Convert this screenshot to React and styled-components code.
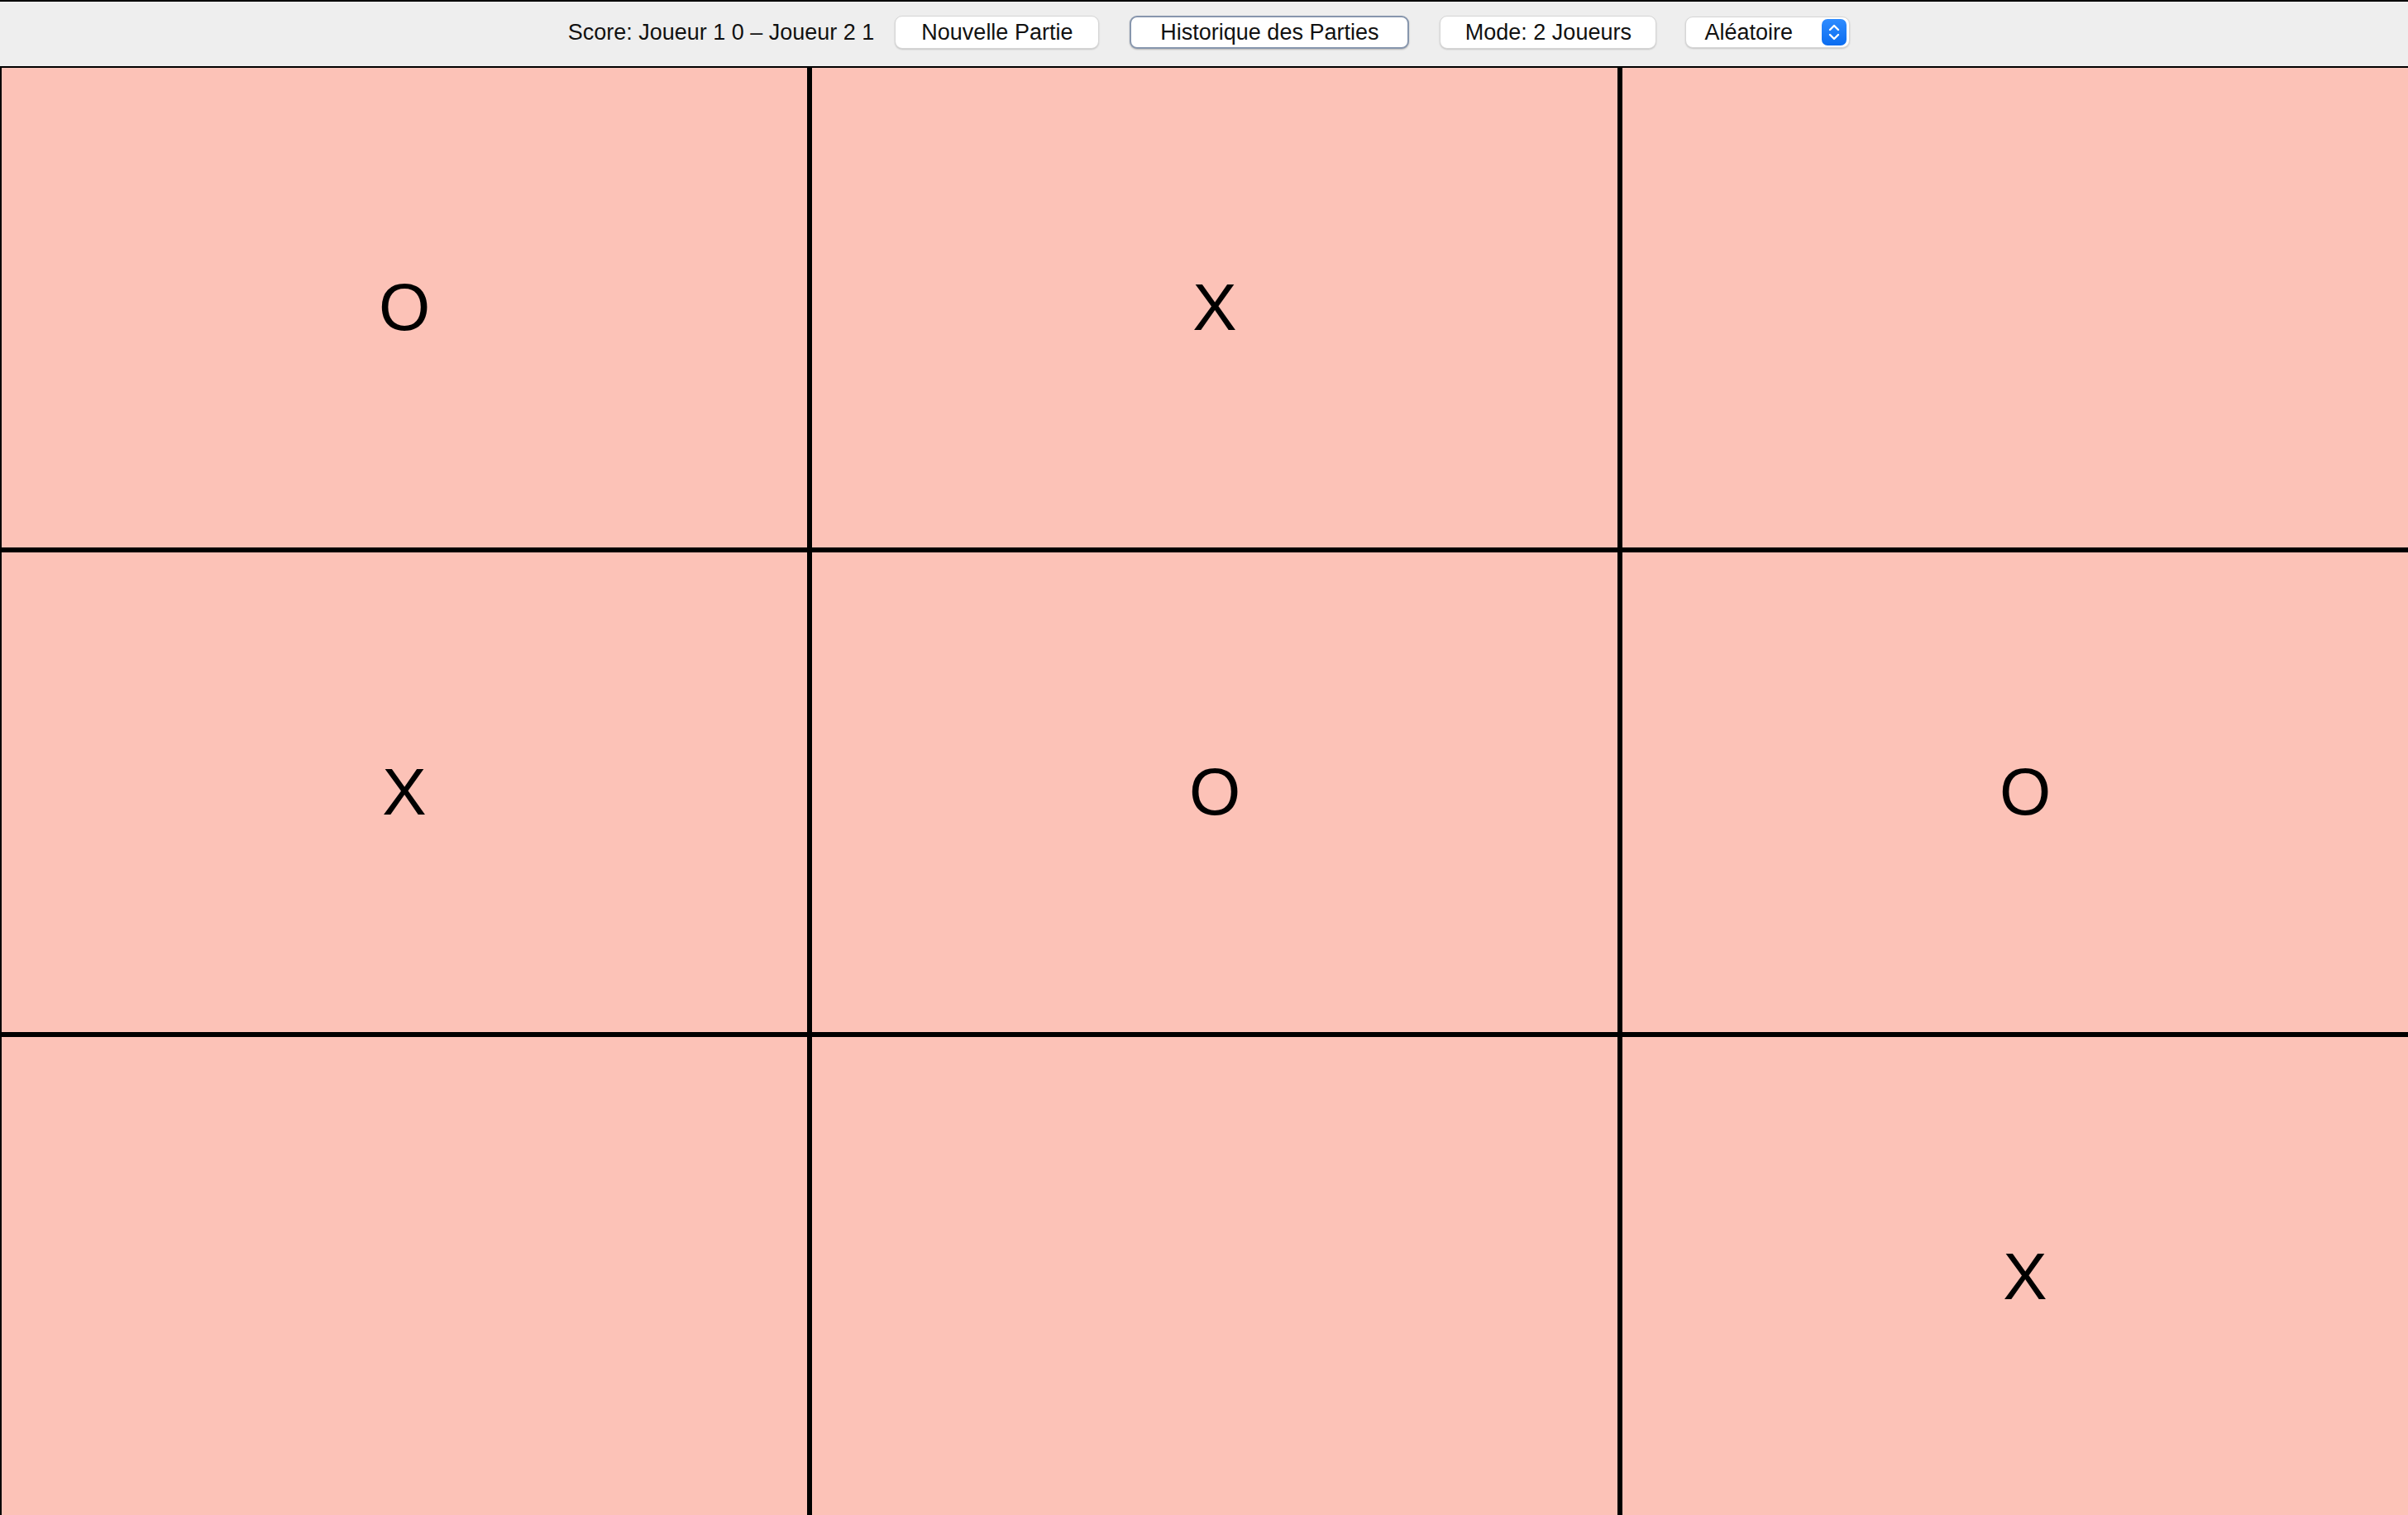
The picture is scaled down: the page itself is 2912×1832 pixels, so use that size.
import React from "react";
import styled, { createGlobalStyle } from "styled-components";

const Global = createGlobalStyle`
  html, body {
    margin: 0;
    padding: 0;
    width: 2912px;
    height: 1832px;
    overflow: hidden;
    background: #eeeeee;
  }
  * { box-sizing: border-box; }
`;

const Window = styled.div`
  width: 2912px;
  height: 1832px;
  overflow: hidden;
  border-top: 2px solid #000;
  display: flex;
  flex-direction: column;
  font-family: "Liberation Sans", Arial, sans-serif;
`;

const Toolbar = styled.div`
  height: 80px;
  flex: none;
  background: #eeeeee;
  display: flex;
  align-items: center;
  justify-content: center;
  padding: 0 0 4px 12px;
  border-bottom: 2px solid #000;
`;

const ScoreLabel = styled.span`
  font-size: 27px;
  color: #111;
  margin-right: 25px;
  white-space: nowrap;
`;

const Button = styled.button`
  width: ${(p) => p.$w}px;
  height: 40px;
  margin-right: ${(p) => p.$mr || 0}px;
  background: #ffffff;
  border: ${(p) => (p.$focused ? "2px solid #8796ad" : "1px solid #d6d6d6")};
  border-radius: 9px;
  box-shadow: ${(p) =>
    p.$focused
      ? "0 1px 2px rgba(0,0,0,0.25)"
      : "0 1px 2px rgba(0,0,0,0.18)"};
  font-family: "Liberation Sans", Arial, sans-serif;
  font-size: 27px;
  color: #111;
  padding: 0;
  display: flex;
  align-items: center;
  justify-content: center;
  white-space: nowrap;
  cursor: default;
`;

const Select = styled.div`
  width: 199px;
  height: 38px;
  background: #ffffff;
  border: 1px solid #d6d6d6;
  border-radius: 9px;
  box-shadow: 0 1px 2px rgba(0,0,0,0.18);
  display: flex;
  align-items: center;
  justify-content: space-between;
  padding: 0 3px 0 22px;
  font-size: 27px;
  color: #111;
`;

const Stepper = styled.div`
  width: 30px;
  height: 32px;
  border-radius: 7px;
  background: linear-gradient(#2f8cff, #0a6cf0);
  display: flex;
  align-items: center;
  justify-content: center;
`;

const Board = styled.div`
  flex: none;
  background: #000;
  padding: 0 0 0 2px;
  display: grid;
  grid-template-columns: repeat(3, 974px);
  grid-template-rows: repeat(3, 580px);
  gap: 6px;
  width: 2940px;
`;

const Cell = styled.div`
  background: #fcc2b7;
  display: flex;
  align-items: center;
  justify-content: center;
  font-family: "Liberation Sans", Arial, sans-serif;
  font-size: 80px;
  color: #000;
`;

const cells = ["O", "X", "", "X", "O", "O", "", "", "X"];

export default function App() {
  return (
    <>
      <Global />
      <Window>
        <Toolbar>
          <ScoreLabel>Score: Joueur 1 0 – Joueur 2 1</ScoreLabel>
          <Button $w={247} $mr={37}>Nouvelle Partie</Button>
          <Button $w={338} $mr={37} $focused>Historique des Parties</Button>
          <Button $w={262} $mr={35}>Mode: 2 Joueurs</Button>
          <Select>
            <span>Aléatoire</span>
            <Stepper>
              <svg width="16" height="24" viewBox="0 0 16 24" fill="none">
                <path d="M3 9 L8 4 L13 9" stroke="#fff" strokeWidth="2.4" strokeLinecap="round" strokeLinejoin="round" />
                <path d="M3 15 L8 20 L13 15" stroke="#fff" strokeWidth="2.4" strokeLinecap="round" strokeLinejoin="round" />
              </svg>
            </Stepper>
          </Select>
        </Toolbar>
        <Board>
          {cells.map((c, i) => (
            <Cell key={i}>{c}</Cell>
          ))}
        </Board>
      </Window>
    </>
  );
}
